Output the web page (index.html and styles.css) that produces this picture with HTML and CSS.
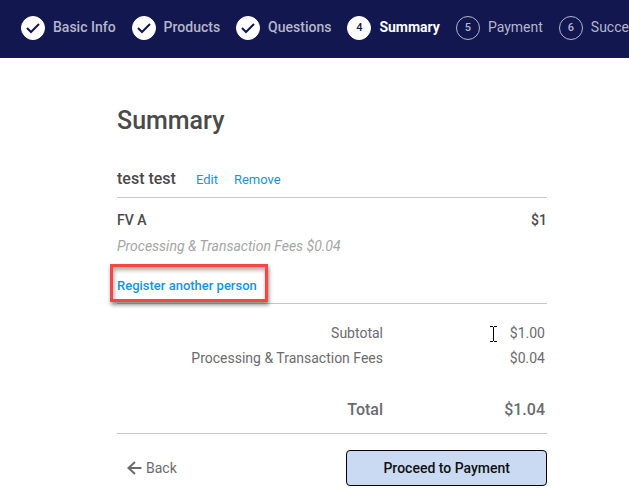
FILE: index.html
```
<!DOCTYPE html>
<html lang="en">
<head>
	<meta charset="UTF-8">
	<title>Summary</title>
	<link rel="stylesheet" href="styles.css">
</head>
<body>
	<header class="header">
		<ol class="steps">
			<li class="step done">
				<span class="circle"><svg width="24" height="24" viewBox="0 0 24 24"><path d="M6 12l4 4 8-8" /></svg></span>
				<span class="label">Basic Info</span>
			</li>
			<li class="step done">
				<span class="circle"><svg width="24" height="24" viewBox="0 0 24 24"><path d="M6 12l4 4 8-8" /></svg></span>
				<span class="label">Products</span>
			</li>
			<li class="step done">
				<span class="circle"><svg width="24" height="24" viewBox="0 0 24 24"><path d="M6 12l4 4 8-8" /></svg></span>
				<span class="label">Questions</span>
			</li>
			<li class="step active" aria-current="step">
				<span class="circle">4</span>
				<span class="label">Summary</span>
			</li>
			<li class="step">
				<span class="circle">5</span>
				<span class="label">Payment</span>
			</li>
			<li class="step">
				<span class="circle">6</span>
				<span class="label">Success</span>
			</li>
		</ol>
	</header>
	<main class="main">
		<h1 class="title">Summary</h1>
		<div class="person">
			<h2 class="name">test test</h2>
			<a href="#">Edit</a>
			<a href="#">Remove</a>
		</div>
		<div class="items">
			<div class="item"><span>FV A</span><span>$1</span></div>
			<p class="fees">Processing &amp; Transaction Fees $0.04</p>
			<p class="register"><a href="#">Register another person</a></p>
		</div>
		<div class="totals">
			<table>
				<tr><th scope="row">Subtotal</th><td>$1.00</td></tr>
				<tr><th scope="row">Processing &amp; Transaction Fees</th><td>$0.04</td></tr>
				<tr class="total"><th scope="row">Total</th><td>$1.04</td></tr>
			</table>
			<svg class="cursor" width="7" height="16" viewBox="0 0 7 16"><path d="M0 .5h3M4 .5h3M3.500 1v14M0 15.500h3M4 15.500h3" /></svg>
		</div>
		<div class="actions">
			<a class="back" href="#">
				<svg width="15" height="14" viewBox="0 0 15 14"><path d="M14.500 7H1.500M8 1L1.500 7 8 13" /></svg>
				Back
			</a>
			<button class="proceed" type="button">Proceed to Payment</button>
		</div>
	</main>
</body>
</html>
```

FILE: styles.css
```
*{box-sizing: border-box;margin: 0;padding: 0;}
body{font-family: Roboto,"Liberation Sans",sans-serif;font-size: 14px;line-height: 24px;color: #6b6b6f;background: #fff;overflow-x: hidden;}
a{color: #1495e0;text-decoration: none;}
svg path{fill: none;}

/* progress steps */
.header{background: #12174f;padding: 16px 0 18px 21px;overflow: hidden;}
.steps{display: flex;gap: 16px;list-style: none;}
.step{display: flex;flex: none;gap: 8px;color: #b5b6cb;}
.circle{display: flex;align-items: center;justify-content: center;width: 24px;height: 24px;border: 1px solid #b5b6cb;border-radius: 50%;font-size: 11px;font-weight: 500;}
.circle svg{flex: none;}
.circle path{stroke: #12174f;stroke-width: 2;}
.label{line-height: 22px;}
.done .label{font-weight: 500;}
.done .circle,.active .circle{background: #fff;border-color: #fff;color: #12174f;}
.active .label{color: #fff;font-weight: 700;}

.main{padding: 47px 82px 16px 117px;}
.title{font-size: 25px;line-height: 32px;font-weight: 500;color: #4a4a4a;margin-bottom: 24px;}
.person{display: flex;align-items: baseline;line-height: 35px;font-size: 13px;border-bottom: 1px solid #c8c8c8;}
.person a{margin-right: 16px;}
.name{font-size: 16px;font-weight: 500;color: #4a4a4a;margin-right: 20px;}

.items{padding: 10px 0 5px;border-bottom: 1px solid #c8c8c8;}
.item{display: flex;justify-content: space-between;font-weight: 500;color: #4a4a4a;}
.fees{margin-top: 2px;font-style: italic;color: #a5a5a5;}
.register{margin-top: 16px;font-size: 13px;font-weight: 500;}
.register a{position: relative;}
.register a::after{content: "";position: absolute;top: -14px;right: -11px;bottom: -9px;left: -7px;border: 3px solid #fb4545;box-shadow: 1px 3px 4px rgba(0,0,0,0.45),inset 1px 3px 4px rgba(0,0,0,0.35);pointer-events: none;}

.totals{position: relative;padding: 16px 0 11px;border-bottom: 1px solid #c8c8c8;}
.totals table{width: 100%;border-collapse: collapse;text-align: right;}
.totals th{font-weight: 400;text-align: right;height: 25px;}
.totals td{width: 164px;padding-right: 2px;}
.totals .total th,.totals .total td{padding-top: 28px;font-size: 16px;font-weight: 500;}
.cursor{position: absolute;top: 22px;right: 50px;}
.cursor path{stroke: #000;}

.actions{display: flex;align-items: center;justify-content: space-between;padding-top: 16px;}
.back{display: flex;align-items: center;gap: 4px;margin-left: 10px;color: #6b6b6f;}
.back path{stroke: #6b6b6f;stroke-width: 2;}
.proceed{padding: 5px 36px;border: 1px solid #000;border-radius: 4px;background: #c9daf2;color: #111;font: inherit;font-weight: 500;}
```
